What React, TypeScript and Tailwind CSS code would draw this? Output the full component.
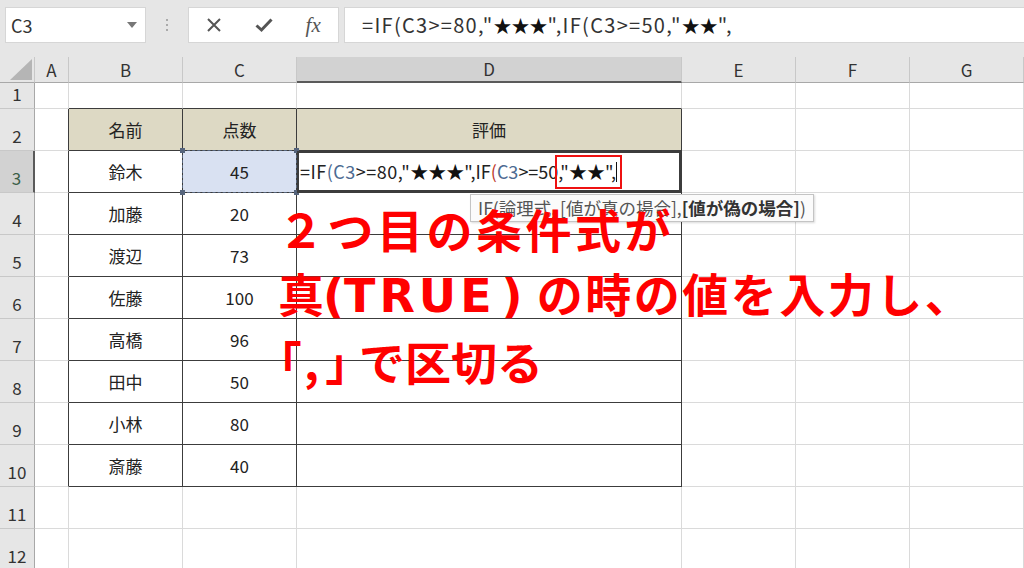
import React from 'react';

const names = ['鈴木', '加藤', '渡辺', '佐藤', '高橋', '田中', '小林', '斎藤'];
const scores = ['45', '20', '73', '100', '96', '50', '80', '40'];
const cols = ['A', 'B', 'C', 'D', 'E', 'F', 'G'];
const rows = [1, 2, 3, 4, 5, 6, 7, 8, 9, 10, 11, 12];

function cellClass(r: number, c: number): string {
  const inTable = r >= 2 && r <= 10 && c >= 1 && c <= 3;
  if (inTable && r === 2) return 'bg-[#ddd9c4] border-r border-b border-[#3c3c3c]';
  if (inTable) return 'bg-white border-r border-b border-[#3c3c3c]';
  if (r === 1 && c >= 1 && c <= 3) return 'bg-white border-r border-b border-r-[#dadada] border-b-[#3c3c3c]';
  if (c === 0 && r >= 2 && r <= 10) return 'bg-white border-r border-b border-r-[#3c3c3c] border-b-[#dadada]';
  return 'bg-white border-r border-b border-[#dadada]';
}

function D3Content() {
  return (
    <div className="flex items-center h-full pl-[3px] text-[18px] text-[#222] whitespace-nowrap">
      <span className="tracking-[0.5px]">=IF</span>
      <span className="tracking-[0.5px] text-[#4c6a92]">(C3</span>
      <span className="tracking-[0.5px]">&gt;=80,"</span>
      <span className="text-[#111]">★★★</span>
      <span>",IF</span>
      <span className="text-[#c0392b]">(</span>
      <span className="text-[#4c6a92]">C3</span>
      <span>&gt;=50,</span>
      <span className="inline-flex items-center h-[34px] border-2 border-[#ee1111] -ml-[8px] pl-[3px] pr-[3px]">
        <span>"</span>
        <span className="text-[#111]">★★</span>
        <span>",</span>
        <span className="inline-block w-[1px] h-[20px] bg-[#111]"></span>
      </span>
    </div>
  );
}

function CellContent({ r, c }: { r: number; c: number }) {
  if (r === 2 && c === 1) return <div className="flex items-center justify-center h-full text-[17px] text-[#222]">名前</div>;
  if (r === 2 && c === 2) return <div className="flex items-center justify-center h-full text-[17px] text-[#222]">点数</div>;
  if (r === 2 && c === 3) return <div className="flex items-center justify-center h-full text-[17px] text-[#222]">評価</div>;
  if (r >= 3 && r <= 10 && c === 1)
    return <div className="flex items-center justify-center h-full text-[17px] text-[#222]">{names[r - 3]}</div>;
  if (r >= 3 && r <= 10 && c === 2)
    return <div className="flex items-center justify-center h-full text-[17px] text-[#222]">{scores[r - 3]}</div>;
  if (r === 3 && c === 3) return <D3Content />;
  return null;
}

export default function App() {
  return (
    <div className="relative w-[1024px] h-[568px] overflow-hidden bg-[#e6e6e6] font-['Noto_Sans_CJK_JP','Noto_Sans',sans-serif]">
      {/* Formula bar */}
      <div className="flex items-start h-[57px] pt-[7px] pl-[5px]">
        <div className="flex items-center justify-between w-[141px] h-[36px] bg-white border border-[#d6d6d6] pl-[5px] pr-[8px]">
          <span className="text-[18px] text-[#333]">C3</span>
          <svg width="10" height="6" viewBox="0 0 10 6">
            <path d="M0 0 L10 0 L5 6 Z" fill="#777" />
          </svg>
        </div>
        <div className="flex flex-col items-center justify-center w-[42px] h-[36px] gap-[3px]">
          <span className="block w-[2px] h-[2px] bg-[#aaa]"></span>
          <span className="block w-[2px] h-[2px] bg-[#aaa]"></span>
          <span className="block w-[2px] h-[2px] bg-[#aaa]"></span>
        </div>
        <div className="flex items-center w-[151px] h-[36px] bg-white border border-[#d6d6d6]">
          <div className="flex items-center justify-center w-[50px]">
            <svg width="16" height="16" viewBox="0 0 16 16">
              <path d="M2 2 L14 14 M14 2 L2 14" stroke="#555" strokeWidth="2" />
            </svg>
          </div>
          <div className="flex items-center justify-center w-[50px]">
            <svg width="18" height="16" viewBox="0 0 18 16">
              <path d="M1.5 8.5 L6.5 13 L16.5 2.5" stroke="#555" strokeWidth="3" fill="none" />
            </svg>
          </div>
          <div className="flex items-center justify-center w-[50px]">
            <span className="font-['Liberation_Serif',serif] italic text-[21px] text-[#555] leading-none">fx</span>
          </div>
        </div>
        <div className="flex items-center flex-1 h-[36px] ml-[5px] bg-white border border-[#d6d6d6] border-r-0 pl-[17px] text-[#333] whitespace-nowrap">
          <span className="text-[20px] tracking-[1.3px]">=IF(C3&gt;=80,"</span>
          <span className="text-[18px] text-[#111]">★★★</span>
          <span className="text-[20px] tracking-[1.3px]">",IF(C3&gt;=50,"</span>
          <span className="text-[18px] text-[#111]">★★</span>
          <span className="text-[20px] tracking-[1.3px]">",</span>
        </div>
      </div>

      {/* Sheet grid */}
      <div className="grid grid-cols-[35px_34px_114px_114px_385px_114px_114px_114px] grid-rows-[26px_26px_repeat(11,42px)]">
        <div className="relative bg-[#e6e6e6] border-r border-b border-r-[#c8c8c8] border-b-[#a8a8a8]">
          <svg className="absolute right-[2px] bottom-[2px]" width="22" height="21" viewBox="0 0 22 21">
            <path d="M22 0 L22 21 L0 21 Z" fill="#b5b5b5" />
          </svg>
        </div>
        {cols.map((c) =>
          c === 'D' ? (
            <div
              key={c}
              className="flex items-center justify-center bg-[#d2d2d2] border-r border-r-[#c8c8c8] border-b-2 border-b-[#5a5a5a] text-[17px] text-[#333]"
            >
              {c}
            </div>
          ) : (
            <div
              key={c}
              className="flex items-center justify-center bg-[#e6e6e6] border-r border-b border-r-[#c8c8c8] border-b-[#a8a8a8] text-[17px] text-[#333]"
            >
              {c}
            </div>
          )
        )}

        {rows.map((r) => (
          <React.Fragment key={r}>
            {r === 3 ? (
              <div className="flex items-end justify-center pb-[2px] bg-[#d2d2d2] border-b border-b-[#c8c8c8] border-r-2 border-r-[#5a5a5a] text-[17px] text-[#3b5f48]">
                {r}
              </div>
            ) : (
              <div className="flex items-end justify-center pb-[2px] bg-[#e6e6e6] border-b border-r border-b-[#c8c8c8] border-r-[#a8a8a8] text-[17px] text-[#333]">
                {r}
              </div>
            )}
            {cols.map((c, ci) => {
              if (r === 3 && ci === 2) {
                return (
                  <div key={c} className="relative bg-[#d9e1f2] border-r border-b border-[#3c3c3c]">
                    <div className="absolute -left-[1px] -top-[1px] -right-[1px] -bottom-[1px] border border-dashed border-[#56657d]"></div>
                    <span className="absolute -left-[3px] -top-[3px] w-[5px] h-[5px] bg-[#56657d]"></span>
                    <span className="absolute -right-[3px] -top-[3px] w-[5px] h-[5px] bg-[#56657d]"></span>
                    <span className="absolute -left-[3px] -bottom-[3px] w-[5px] h-[5px] bg-[#56657d]"></span>
                    <span className="absolute -right-[3px] -bottom-[3px] w-[5px] h-[5px] bg-[#56657d]"></span>
                    <div className="relative flex items-center justify-center h-full text-[17px] text-[#222]">45</div>
                  </div>
                );
              }
              if (r === 3 && ci === 3) {
                return (
                  <div key={c} className="relative bg-white border-r border-b border-[#3c3c3c] shadow-[inset_0_0_0_2px_#3c3c3c]">
                    <CellContent r={r} c={ci} />
                  </div>
                );
              }
              return (
                <div key={c} className={cellClass(r, ci)}>
                  <CellContent r={r} c={ci} />
                </div>
              );
            })}
          </React.Fragment>
        ))}
      </div>

      {/* Function tooltip */}
      <div className="absolute left-[470px] top-[194px] h-[28px] flex items-center px-[7px] bg-[#fbfbfb] border border-[#c4c4c4] shadow-[1px_1px_2px_rgba(0,0,0,0.15)] text-[17.5px] text-[#555] whitespace-nowrap">
        <span>IF(論理式, [値が真の場合], </span>
        <span className="font-bold text-[#333]">[値が偽の場合]</span>
        <span>)</span>
      </div>

      {/* Red annotation */}
      <div className="absolute left-[278px] top-[196px] text-[#ff0000] font-bold whitespace-nowrap text-[46px] leading-[64px]">
        <div className="tracking-[3.5px]">２つ目の条件式が</div>
        <div>
          <span>真</span>
          <span className="-ml-[1px] font-['DejaVu_Sans',sans-serif]">(</span>
          <span className="font-['DejaVu_Sans',sans-serif] tracking-[4px]">TRUE</span>
          <span className="ml-[6px] font-['DejaVu_Sans',sans-serif]">)</span>
          <span className="ml-[14px] tracking-[2.5px]">の時の値を入力し、</span>
        </div>
        <div>
          <span className="[font-feature-settings:'palt']">「</span>
          <span className="ml-[3px]">,</span>
          <span className="ml-[7px] [font-feature-settings:'palt']">」</span>
          <span className="ml-[10px]">で区切る</span>
        </div>
      </div>
    </div>
  );
}
